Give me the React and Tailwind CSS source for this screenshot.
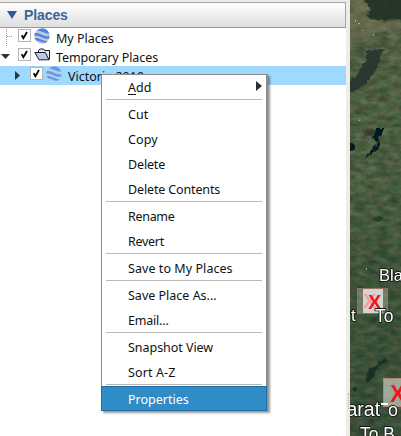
import React from "react";

const MENU = [
  [
    { label: "Cut", tracking: "tracking-[0px]" },
    { label: "Copy", tracking: "tracking-[0.12px]" },
    { label: "Delete", tracking: "tracking-[-0.15px]" },
    { label: "Delete Contents", tracking: "tracking-[-0.14px]" },
  ],
  [
    { label: "Rename", tracking: "tracking-[-0.3px]" },
    { label: "Revert", tracking: "tracking-[-0.3px]" },
  ],
  [{ label: "Save to My Places", tracking: "tracking-[0.06px]" }],
  [
    { label: "Save Place As...", tracking: "tracking-[0px]" },
    { label: "Email...", tracking: "tracking-[-0.2px]" },
  ],
  [
    { label: "Snapshot View", tracking: "tracking-[-0.04px]" },
    { label: "Sort A-Z", tracking: "tracking-[0.12px]" },
  ],
];

function Checkbox() {
  return (
    <span className="flex h-[13px] w-[13px] shrink-0 items-center justify-center border border-[#b4b4b4] bg-white">
      <svg width="9" height="9" viewBox="0 0 9 9">
        <path d="M1.7 4.2 3.4 7.2 7 1" fill="none" stroke="#000" strokeWidth="1.8" />
      </svg>
    </span>
  );
}

function Globe({ faded }) {
  return (
    <svg className={faded ? "shrink-0 opacity-75" : "shrink-0"} width="16" height="16" viewBox="0 0 16 16">
      <circle cx="8" cy="8" r="7.7" fill="#c3c9d6" />
      <path d="M3 2.6C4.8.9 7.5 0 10.4.8 12.6 1.6 14.5 3.3 15.2 5.6 11.5 6.2 8.5 3 3 2.6Z" fill="#4a86e6" />
      <path d="M.6 5.2C5.8 3.8 9 9.3 15.6 8.2L15 10.8C9 11.2 6 7.2.4 7.4Z" fill="#4a86e6" />
      <path d="M.8 10C5 9.4 8.2 12.8 13.4 13L11.6 14.7C7.5 15 5.5 12.1 1.8 12.2Z" fill="#4a86e6" />
    </svg>
  );
}

function Folder() {
  return (
    <svg className="shrink-0" width="17" height="13" viewBox="0 0 17 13">
      <path d="M4.5 10V2.5L6 1h3.5l1 1.5h5V11.5" fill="#dfe5f2" stroke="#161a28" />
      <path d="M.8 4.5h10.5l3.7 7.3H5Z" fill="#bdc9e4" stroke="#161a28" strokeLinejoin="round" />
    </svg>
  );
}

function MapView() {
  return (
    <svg className="block h-[436px] w-[51px] shrink-0" viewBox="350 0 51 436" fontFamily="'Liberation Sans', Arial, sans-serif">
      <defs>
        <filter id="terrain" x="0" y="0" width="100%" height="100%" colorInterpolationFilters="sRGB">
          <feTurbulence type="fractalNoise" baseFrequency="0.09 0.18" numOctaves="4" seed="8" />
          <feColorMatrix values="0.42 0.12 0 0 0.02  0.2 0.3 0 0 0.1  0.2 0.16 0.06 0 0.03  0 0 0 0 1" />
        </filter>
        <filter id="rough" x="-10%" y="-10%" width="120%" height="120%">
          <feTurbulence type="fractalNoise" baseFrequency="0.25" numOctaves="2" seed="3" result="noise" />
          <feDisplacementMap in="SourceGraphic" in2="noise" scale="5" xChannelSelector="R" yChannelSelector="G" />
        </filter>
        <linearGradient id="shade" x2="0" y2="1">
          <stop offset="0" stopColor="#5d6b4c" stopOpacity=".35" />
          <stop offset=".4" stopColor="#4a6246" stopOpacity=".35" />
          <stop offset=".6" stopColor="#2f4a32" stopOpacity=".45" />
          <stop offset="1" stopColor="#284430" stopOpacity=".5" />
        </linearGradient>
      </defs>
      <rect x="350" width="51" height="436" filter="url(#terrain)" />
      <rect x="350" width="51" height="436" fill="url(#shade)" />
      <g filter="url(#rough)">
        <path d="M362-4H406V20L391 19 373 21 367 16 371 9Z" fill="#222e25" opacity=".85" />
        <path d="M350 0h12l7 5-4 12 18 6 18-2v9l-25 2-9 8-17-2Z" fill="#85785c" opacity=".4" />
        <path d="M367 51 384 49 378 66 374 72 366 84 350 93V80L358 75 362 64 367 60Z" fill="#29352f" opacity=".95" />
        <path d="M359 131 374 129 382 135 366 136Z" fill="#332c27" opacity=".5" />
        <path d="M376 129 383 129 383 133 378 137 380 144 377 151 370 154 361 160 374 147 377 143 373 139Z" fill="#061e22" />
        <ellipse cx="352" cy="147" rx="3" ry="4" fill="#08191b" />
        <path d="M384 358 390 361 378 366 373 377 365 384 368 371 376 365Z" fill="#10271f" opacity=".75" />
        <path d="M351 389 357 386 354 393Z" fill="#122a20" opacity=".8" />
        <ellipse cx="379" cy="219" rx="4" ry="3" fill="#183c2b" opacity=".6" />
      </g>
      <g fill="#e1ddc5" opacity=".6">
        <rect x="355" y="20" width="1" height="2" /><rect x="358" y="23" width="2" height="1" />
        <rect x="362" y="30" width="1" height="1" /><rect x="373" y="34" width="1" height="2" />
        <rect x="359" y="120" width="1" height="1" /><rect x="366" y="268" width="1" height="2" />
      </g>
      <rect x="357.5" y="288.5" width="30" height="25" fill="#c4bcb3" fillOpacity=".38" stroke="#b47768" strokeOpacity=".65" />
      <rect x="363" y="289" width="20" height="24" fill="#e4e7e3" fillOpacity=".85" />
      <g fontSize="20" fontWeight="700">
        <text x="363" y="308" fill="#f89d9d">X</text>
        <text x="368" y="309" fill="#f01920">X</text>
      </g>
      <rect x="383.5" y="378.5" width="25" height="28" fill="#c8cec3" fillOpacity=".7" stroke="#bb8070" />
      <text x="390" y="401.5" fontSize="23" fontWeight="700" fill="#ef171b">X</text>
      <g fill="#fff" stroke="#111813" strokeWidth="1.8" paintOrder="stroke" strokeLinejoin="round">
        <text x="379" y="281" fontSize="16.5">Bla</text>
        <text x="351" y="321" fontSize="17">t</text>
        <text x="375" y="322" fontSize="17.5">To</text>
        <text x="346.5" y="416" fontSize="19.5">arat</text>
        <path d="M381 403h7v2h-7Z" stroke="none" />
        <text x="388" y="416" fontSize="18">o</text>
        <text x="360" y="439.5" fontSize="17.5">To B</text>
      </g>
    </svg>
  );
}

function MenuItem({ label, tracking }) {
  return <div className={`flex h-[25px] items-center pl-[26px] pt-[3px] ${tracking}`}>{label}</div>;
}

function Separator() {
  return <div className="mx-1 h-[2px] border-t border-[#b9b9b9]" />;
}

function ContextMenu() {
  return (
    <div className="absolute left-[101px] top-[74px] h-[337px] w-[167px] border border-r-2 border-[#8d8d8d] bg-white text-[12.5px] shadow-[2px_2px_2px_rgba(0,0,0,0.4)]">
      <div className="flex h-6 items-center justify-between pl-[26px] pr-[4px]">
        <span className="mt-[3px]"><span className="underline underline-offset-2">A</span>dd</span>
        <svg className="-mt-0.5" width="6" height="10" viewBox="0 0 6 10"><path d="M0 0 6 5 0 10Z" fill="#303030" /></svg>
      </div>
      {MENU.map((group, index) => (
        <React.Fragment key={index}>
          <Separator />
          {group.map((item) => <MenuItem key={item.label} {...item} />)}
        </React.Fragment>
      ))}
      <Separator />
      <div className="-ml-px -mr-px flex h-[25px] items-center border border-[#216ca0] bg-[#308cc6] pl-[26px] pt-[3px] text-white">Properties</div>
    </div>
  );
}

export default function App() {
  return (
    <main className="relative flex h-[436px] w-[401px] overflow-hidden bg-[#efebe7] font-['Noto_Sans','Open_Sans',sans-serif] text-[12.5px] text-[#111]">
      <section className="flex w-[346px] shrink-0 flex-col pt-[2px]">
        <header className="flex h-[26px] items-center border border-l-0 border-t-[#a4a4a4] border-r-[#a4a4a4] border-b-[#999] bg-linear-to-b from-white to-[#dedede] pl-[7px]">
          <svg width="10" height="8" viewBox="0 0 10 8"><path d="M0 0H10L5 8Z" fill="#2e5c98" /></svg>
          <h1 className="ml-[7px] font-['Liberation_Sans',Arial,sans-serif] text-[14px] font-bold tracking-[-0.1px] text-[#3c6498]">Places</h1>
        </header>
        <div className="flex-1 bg-white">
          <div className="flex h-[19px] items-center">
            <svg width="18" height="19" viewBox="0 0 18 19"><path d="M6.5 1V19M7 8.5h6" fill="none" stroke="#999" strokeDasharray="1 1" /></svg>
            <span className="-mt-[5px] flex"><Checkbox /></span>
            <span className="-mt-[3px] ml-[3px]"><Globe /></span>
            <span className="ml-[6px] mt-[3px]">My Places</span>
          </div>
          <div className="flex h-[19px] items-center">
            <svg className="ml-px" width="9" height="5" viewBox="0 0 9 5"><path d="M0 0H9L4.5 5Z" fill="#303030" /></svg>
            <span className="-mt-[5px] ml-2 flex"><Checkbox /></span>
            <span className="-mt-1 ml-[3px]"><Folder /></span>
            <span className="ml-[5px] mt-[3px] tracking-[-0.1px]">Temporary Places</span>
          </div>
          <div className="flex h-[19px] items-center bg-[#9fd9ff]">
            <svg className="ml-[15px]" width="5" height="9" viewBox="0 0 5 9"><path d="M0 0 5 4.5 0 9Z" fill="#173c54" /></svg>
            <span className="-mt-[5px] ml-[10px] flex"><Checkbox /></span>
            <span className="-mt-[3px] ml-[3px]"><Globe faded /></span>
            <span className="ml-[6px] mt-[3px]">Victoria 2019</span>
          </div>
        </div>
      </section>
      <div className="flex w-1 shrink-0 items-end justify-center pb-[27px]">
        <div className="h-4 border-l border-dotted border-[#aaa]" />
      </div>
      <MapView />
      <ContextMenu />
    </main>
  );
}
